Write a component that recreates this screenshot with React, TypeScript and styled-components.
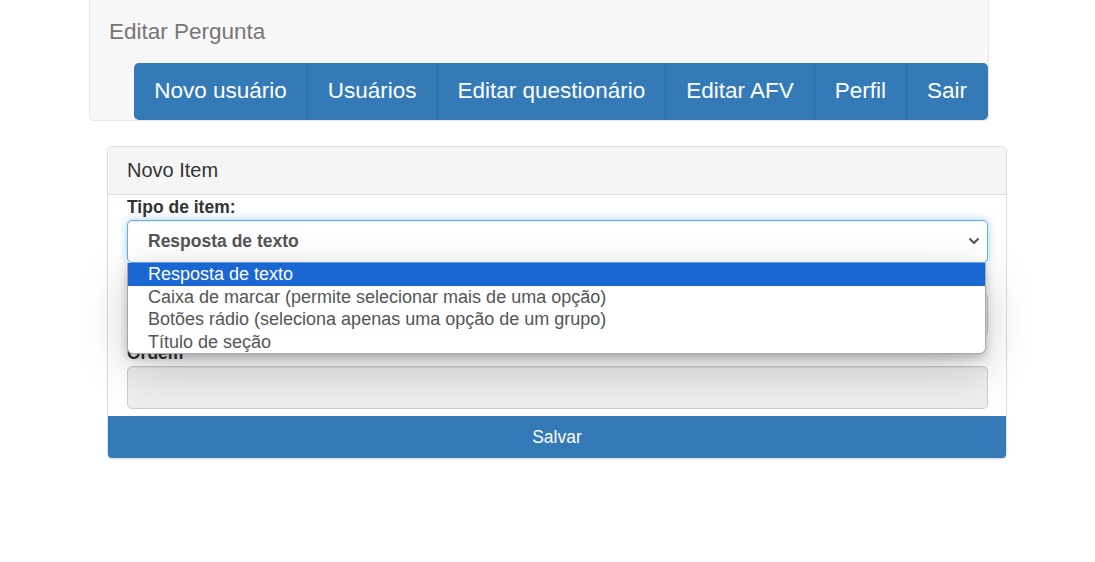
import React from "react";
import styled, { createGlobalStyle } from "styled-components";

const Global = createGlobalStyle`
  html, body { margin: 0; padding: 0; background: #fff; }
  body { font-family: "Liberation Sans", Arial, sans-serif; font-size: 17.5px; color: #333; }
  * { box-sizing: border-box; }
`;

const Page = styled.div`
  width: 1095px;
  min-height: 562px;
  position: relative;
`;

const TopPanel = styled.div`
  margin-left: 89px;
  width: 900px;
  height: 121px;
  background: #f8f8f8;
  border: 1px solid #e7e7e7;
  border-top: none;
  border-radius: 0 0 5px 5px;
  display: flex;
  flex-direction: column;
`;

const Brand = styled.div`
  height: 63px;
  padding-left: 19px;
  display: flex;
  align-items: center;
  font-size: 22.5px;
  color: #777;
`;

const Nav = styled.nav`
  align-self: flex-end;
  margin-bottom: -1px;
  height: 57px;
  display: flex;
  background: #337ab7;
  border-radius: 5px;
  overflow: hidden;
`;

const NavItem = styled.a<{ $last?: boolean }>`
  display: flex;
  align-items: center;
  padding: 0 20px 2px;
  font-size: 22.5px;
  color: #fff;
  text-decoration: none;
  border-right: ${(p) => (p.$last ? "none" : "1px solid #2e6da4")};
  padding-right: ${(p) => (p.$last ? "21px" : "20px")};
`;

const Card = styled.div`
  margin: 25px 0 0 107px;
  width: 900px;
  border: 1px solid #ddd;
  border-radius: 5px;
  background: #fff;
  box-shadow: 0 1px 1px rgba(0, 0, 0, 0.05);
`;

const CardHeader = styled.div`
  height: 48px;
  padding: 0 19px;
  display: flex;
  align-items: center;
  font-size: 20px;
  color: #333;
  background: #f5f5f5;
  border-bottom: 1px solid #ddd;
  border-radius: 4px 4px 0 0;
`;

const CardBody = styled.div`
  padding: 2px 18px 0 19px;
`;

const Group = styled.div`
  position: relative;
  margin-bottom: 7.5px;
`;

const Label = styled.label`
  display: block;
  height: 20px;
  line-height: 20px;
  margin-bottom: 3px;
  font-weight: bold;
  font-size: 17.5px;
  color: #333;
`;

const SelectBox = styled.div`
  height: 42.5px;
  display: flex;
  align-items: center;
  justify-content: space-between;
  padding: 0 7px 0 20px;
  border: 1px solid #66afe9;
  border-radius: 5px;
  background: #fff;
  box-shadow: inset 0 1px 1px rgba(0, 0, 0, 0.075), 0 0 8px rgba(102, 175, 233, 0.6);
  font-weight: bold;
  font-size: 17.5px;
  color: #555;
`;

const Input = styled.div<{ $disabled?: boolean }>`
  height: 42.5px;
  border: 1px solid #ccc;
  border-radius: 5px;
  background: ${(p) => (p.$disabled ? "#eee" : "#fff")};
  box-shadow: inset 0 1px 1px rgba(0, 0, 0, 0.075);
`;

const Popup = styled.ul`
  position: absolute;
  top: 66px;
  left: 0;
  width: 859px;
  margin: 0;
  padding: 0;
  list-style: none;
  background: #fff;
  border: 1px solid #a8a8a8;
  border-top: none;
  border-radius: 0 0 6px 6px;
  overflow: hidden;
  box-shadow: 0 4px 10px rgba(0, 0, 0, 0.22), 0 14px 48px rgba(0, 0, 0, 0.2);
  z-index: 10;
`;

const Option = styled.li<{ $active?: boolean }>`
  height: 22.5px;
  line-height: 22.5px;
  padding-left: 20px;
  font-size: 18px;
  color: ${(p) => (p.$active ? "#fff" : "#555")};
  background: ${(p) => (p.$active ? "#1a66d2" : "transparent")};
  white-space: nowrap;
`;

const SaveButton = styled.button`
  display: block;
  width: 100%;
  height: 42px;
  border: none;
  border-radius: 0 0 4px 4px;
  background: #337ab7;
  color: #fff;
  font-family: "Liberation Sans", Arial, sans-serif;
  font-size: 17.5px;
  cursor: pointer;
`;

const Chevron = () => (
  <svg width="12" height="8" viewBox="0 0 12 8">
    <path d="M1.5 1.5 L6 6 L10.5 1.5" fill="none" stroke="#555" strokeWidth="2" />
  </svg>
);

const navItems = ["Novo usuário", "Usuários", "Editar questionário", "Editar AFV", "Perfil", "Sair"];
const options = [
  "Resposta de texto",
  "Caixa de marcar (permite selecionar mais de uma opção)",
  "Botões rádio (seleciona apenas uma opção de um grupo)",
  "Título de seção",
];

export default function App() {
  return (
    <Page>
      <Global />
      <TopPanel>
        <Brand>Editar Pergunta</Brand>
        <Nav>
          {navItems.map((n, i) => (
            <NavItem key={n} href="#" $last={i === navItems.length - 1}>
              {n}
            </NavItem>
          ))}
        </Nav>
      </TopPanel>
      <Card>
        <CardHeader>Novo Item</CardHeader>
        <CardBody>
          <Group>
            <Label>Tipo de item:</Label>
            <SelectBox>
              <span>Resposta de texto</span>
              <Chevron />
            </SelectBox>
            <Popup>
              {options.map((o, i) => (
                <Option key={o} $active={i === 0}>
                  {o}
                </Option>
              ))}
            </Popup>
          </Group>
          <Group>
            <Label />
            <Input />
          </Group>
          <Group>
            <Label>Ordem</Label>
            <Input $disabled />
          </Group>
        </CardBody>
        <SaveButton>Salvar</SaveButton>
      </Card>
    </Page>
  );
}
